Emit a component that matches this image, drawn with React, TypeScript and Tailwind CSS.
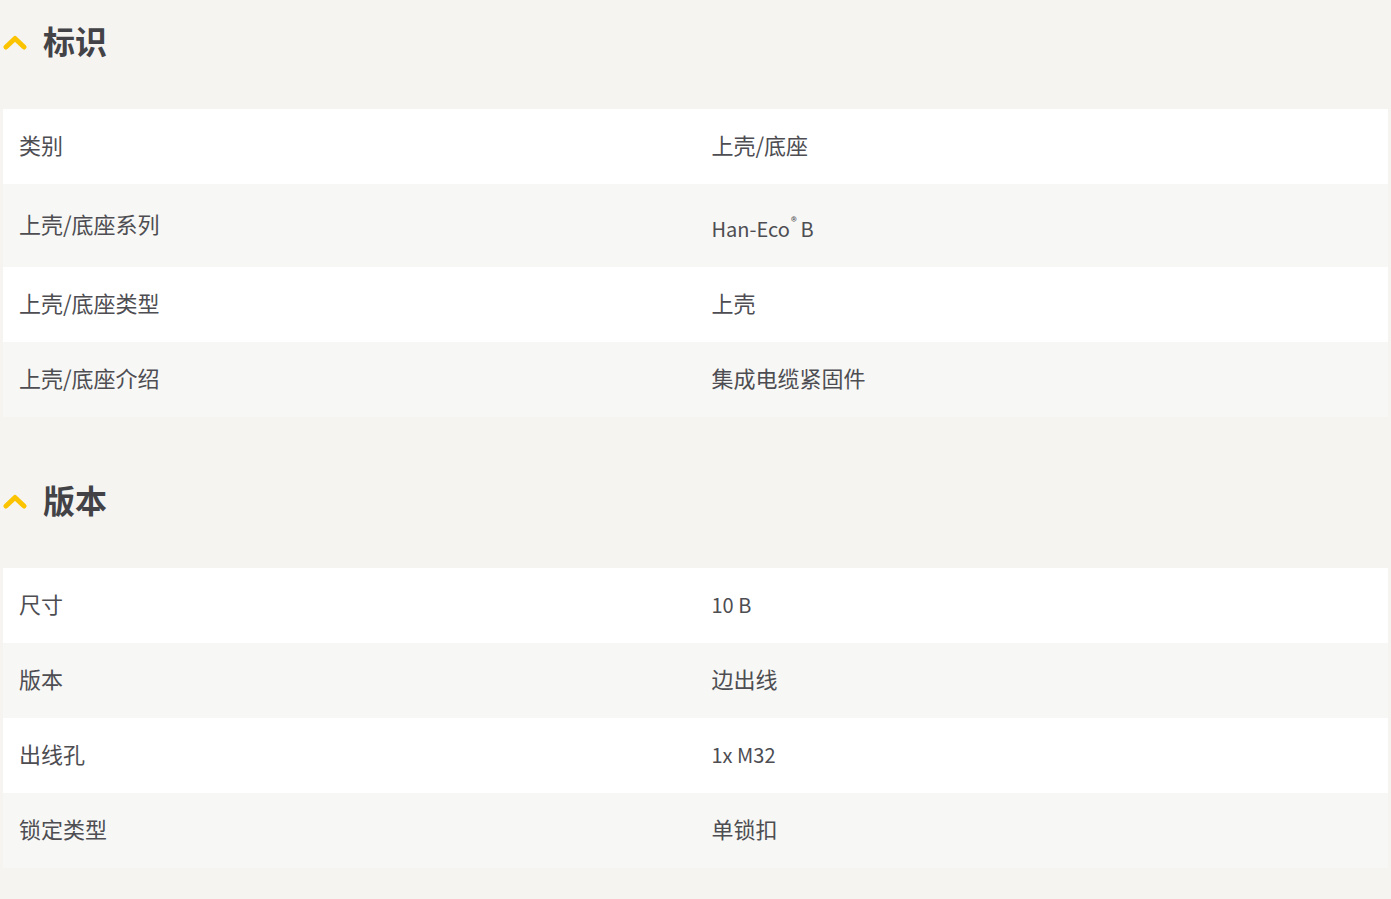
import React from "react";

type Row = { label: string; value: React.ReactNode; tall?: boolean; small?: boolean };

const Chevron = () => (
  <svg width="24" height="16" viewBox="0 0 24 16" className="shrink-0">
    <polyline
      points="3,13 12,4.5 21,13"
      fill="none"
      stroke="#fcc300"
      strokeWidth="5"
      strokeLinecap="round"
      strokeLinejoin="round"
    />
  </svg>
);

const Section = ({ title, rows, first }: { title: string; rows: Row[]; first?: boolean }) => (
  <section className={first ? "" : "mt-[42px]"}>
    <div className="h-[84px] flex items-center pl-[3px] mb-[25px]">
      <Chevron />
      <h2 className="ml-[16px] text-[32px] font-bold leading-[40px] pb-[4px] text-[#434347]">{title}</h2>
    </div>
    <div className="mx-[3px]">
      {rows.map((r, i) => (
        <div
          key={i}
          className={`grid grid-cols-2 ${r.tall ? "h-[83px]" : "h-[75px]"} ${i % 2 === 0 ? "bg-white" : "bg-[#f7f7f5]"}`}
        >
          <div className="flex items-center px-4 pb-[4px] text-[22px] leading-[33px] text-[#4d4d52]">{r.label}</div>
          <div
            className={`flex items-center px-4 leading-[33px] text-[#4d4d52] ${r.small ? "text-[20px] pb-[2px]" : "text-[22px]"} ${r.tall ? "pt-[6px]" : ""} ${!r.small && !r.tall ? "pb-[4px]" : ""}`}
          >
            {r.value}
          </div>
        </div>
      ))}
    </div>
  </section>
);

export default function App() {
  const s1: Row[] = [
    { label: "类别", value: "上壳/底座" },
    {
      label: "上壳/底座系列",
      value: (
        <span className="text-[20px]">
          Han-Eco<span className="inline-block text-[12px] leading-none relative -top-[11px] ml-[1px] mr-[4px]">®</span>B
        </span>
      ),
      tall: true,
    },
    { label: "上壳/底座类型", value: "上壳" },
    { label: "上壳/底座介绍", value: "集成电缆紧固件" },
  ];
  const s2: Row[] = [
    { label: "尺寸", value: "10 B", small: true },
    { label: "版本", value: "边出线" },
    { label: "出线孔", value: "1x M32", small: true },
    { label: "锁定类型", value: "单锁扣" },
  ];
  return (
    <div
      className="min-h-[899px] w-full bg-[#f5f4f1]"
      style={{ fontFamily: '"Noto Sans CJK SC", "Noto Sans", sans-serif' }}
    >
      <Section title="标识" rows={s1} first />
      <Section title="版本" rows={s2} />
    </div>
  );
}
